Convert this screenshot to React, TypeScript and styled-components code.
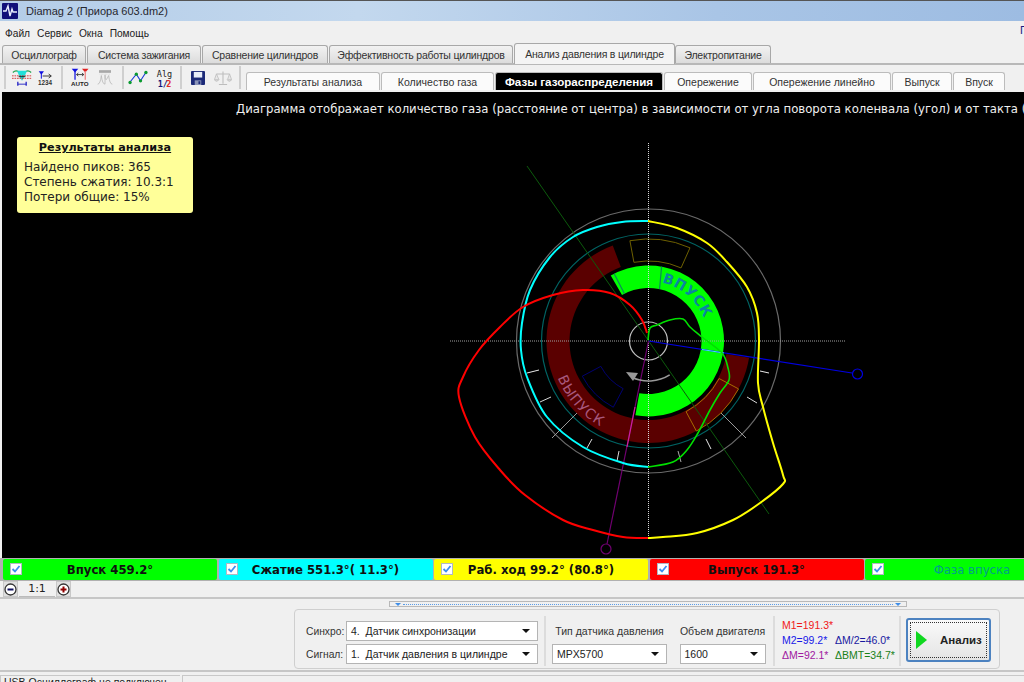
import React from 'react';
import styled, { createGlobalStyle } from 'styled-components';

const GlobalStyle = createGlobalStyle`
    html, body {
        margin: 0;
        padding: 0;
        background: #f0f0f0;
    }
`

const UI_FONT = `"Liberation Sans", Arial, sans-serif`
const WIDE_FONT = `"DejaVu Sans", Verdana, sans-serif`

// --- diagram maths ---
const CX = 648.5
const CY = 341

type Pt = [number, number]

const polar = (r: number, deg: number): Pt => {
    const a = (deg * Math.PI) / 180
    return [CX + r * Math.sin(a), CY - r * Math.cos(a)]
}

const sector = (r1: number, r2: number, from: number, to: number) => {
    const large = Math.abs(to - from) > 180 ? 1 : 0
    const [ax, ay] = polar(r2, from)
    const [bx, by] = polar(r2, to)
    const [cx, cy] = polar(r1, to)
    const [dx, dy] = polar(r1, from)
    return `M${ax} ${ay} A${r2} ${r2} 0 ${large} 1 ${bx} ${by} L${cx} ${cy} A${r1} ${r1} 0 ${large} 0 ${dx} ${dy} Z`
}

const arc = (r: number, from: number, to: number) => {
    const large = Math.abs(to - from) > 180 ? 1 : 0
    const sweep = to > from ? 1 : 0
    const [ax, ay] = polar(r, from)
    const [bx, by] = polar(r, to)
    return `M${ax} ${ay} A${r} ${r} 0 ${large} ${sweep} ${bx} ${by}`
}

const smooth = (p: Pt[]) => {
    let d = `M${p[0][0]} ${p[0][1]}`
    for (let i = 0; i < p.length - 1; i++) {
        const a = p[Math.max(i - 1, 0)]
        const b = p[i]
        const c = p[i + 1]
        const e = p[Math.min(i + 2, p.length - 1)]
        d += ` C${b[0] + (c[0] - a[0]) / 6} ${b[1] + (c[1] - a[1]) / 6} ${c[0] - (e[0] - b[0]) / 6} ${c[1] - (e[1] - b[1]) / 6} ${c[0]} ${c[1]}`
    }
    return d
}

const yellowCurve: Pt[] = [[648, 221], [677, 228], [707, 243], [727, 262], [747, 287], [757, 313], [759, 340], [758, 383], [763, 407], [773, 443], [783, 475], [783, 484], [760, 503], [733, 520], [697, 533], [663, 537], [648, 538]]
const redCurve: Pt[] = [[648, 538], [623, 537], [593, 530], [563, 520], [525, 495], [500, 470], [475, 437], [459, 397], [463, 377], [479, 350], [500, 327], [523, 307], [553, 295], [583, 290], [610, 293], [630, 305], [642, 320], [647, 333]]
const cyanCurve: Pt[] = [[648, 221], [622, 222], [597, 227], [573, 237], [550, 257], [530, 290], [522, 323], [521, 350], [527, 377], [547, 417], [583, 447], [623, 463], [648, 467]]
const greenCurve: Pt[] = [[648, 467], [673, 462], [687, 450], [698, 433], [710, 410], [720, 393], [729, 380], [728, 368], [722, 353], [702, 337], [690, 327], [683, 319], [670, 320], [657, 325], [650, 328], [648, 340]]

const ticks: [number, number, number, number, string][] = [
    [527, 373, 539, 370, '#e8e8e8'],
    [540, 402, 551, 397, '#d8d8d8'],
    [552, 438, 577, 413, '#999'],
    [587, 448, 592, 439, '#d8d8d8'],
    [617, 461, 619, 451, '#d8d8d8'],
    [678, 451, 681, 462, '#aaa'],
    [706, 439, 711, 449, '#e8e8e8'],
    [721, 413, 746, 438, '#999'],
    [747, 397, 757, 403, '#d8d8d8'],
    [760, 371, 769, 373, '#e8e8e8'],
]

const Diagram = () => (
    <DiagramSvg viewBox="2 92 1022 466">
        <defs>
            <path id="inletPath" d={arc(60, 13, 80)}/>
            <path id="exhaustPath" d={arc(98, 248, 192)}/>
        </defs>
        <circle cx={CX} cy={CY} r={132} fill="none" stroke="#6a6a6a" strokeWidth={1.2}/>
        <path d={sector(79, 102, 99.5, 339.5)} fill="#5a0000"/>
        <path d={sector(53, 75.5, -30, 190)} fill="#00ff00"/>
        <path d={`M${polar(53, 12).join(' ')} L${polar(75.5, 10).join(' ')}`} stroke="#0a8a5a" strokeWidth={1.2}/>
        <path d={`M${polar(53, -27).join(' ')} L${polar(75.5, -27).join(' ')}`} stroke="#0a8a5a" strokeWidth={1.2}/>
        <RingLabel fill="#0a86a0" $bold>
            <textPath href="#inletPath">ВПУСК</textPath>
        </RingLabel>
        <RingLabel fill="#a8587e">
            <textPath href="#exhaustPath">ВЫПУСК</textPath>
        </RingLabel>
        <circle cx={CX} cy={CY} r={107} fill="none" stroke="#006464" strokeWidth={1.2}/>
        <path d={sector(80, 102, -10.5, 24)} fill="none" stroke="#6e6000"/>
        <path d={sector(80, 102, 118, 152)} fill="none" stroke="#a86a00"/>
        <path d={sector(54, 75, 208, 242)} fill="none" stroke="#000070"/>
        <circle cx={CX} cy={CY} r={19} fill="none" stroke="#c0c0c0" strokeWidth={1.2}/>
        {ticks.map(([x1, y1, x2, y2, c]) => (
            <line key={`${x1}-${y1}`} x1={x1} y1={y1} x2={x2} y2={y2} stroke={c}/>
        ))}
        <line x1={450} y1={341} x2={846} y2={341} stroke="#a0a0a0" strokeDasharray="1 1"/>
        <line x1={648.5} y1={143} x2={648.5} y2={538} stroke="#d8d8d8" strokeDasharray="1 1"/>
        <line x1={527} y1={166} x2={769} y2={514} stroke="#0c5a0c"/>
        <line x1={CX} y1={CY} x2={852} y2={373} stroke="#0000e0" strokeWidth={1.2}/>
        <line x1={702} y1={349.5} x2={724} y2={353} stroke="#40e0ff" strokeWidth={1.2}/>
        <circle cx={857.5} cy={374} r={5} fill="none" stroke="#0000e0" strokeWidth={1.2}/>
        <line x1={CX} y1={CY} x2={607} y2={544} stroke="#700070" strokeWidth={1.2}/>
        <line x1={635} y1={407} x2={627} y2={447} stroke="#d0209a" strokeWidth={1.2}/>
        <circle cx={606} cy={549} r={5} fill="none" stroke="#700070" strokeWidth={1.2}/>
        <path d={arc(40, 148, 205)} fill="none" stroke="#999" strokeWidth={1.6}/>
        <path d="M626 372 L638 373 L633 381 Z" fill="#999"/>
        <path d={smooth(cyanCurve)} fill="none" stroke="#00ffff" strokeWidth={2}/>
        <path d={smooth(redCurve)} fill="none" stroke="#ff0000" strokeWidth={2}/>
        <path d={smooth(yellowCurve)} fill="none" stroke="#ffff00" strokeWidth={2}/>
        <path d={smooth(greenCurve)} fill="none" stroke="#00e000" strokeWidth={1.6}/>
    </DiagramSvg>
)

// --- small icons ---
const AppIcon = () => (
    <svg width="16" height="16" viewBox="0 0 16 16">
        <rect width="16" height="16" rx="1" fill="#10107a"/>
        <path d="M1 8 H4 L6 3 L8 13 L10 6 L11 9 H15" fill="none" stroke="#e8eeff" strokeWidth="1.4"/>
    </svg>
)

const ScopeIcon = () => (
    <svg width="20" height="19" viewBox="0 0 24 22">
        <path d="M1 5 Q5 1 9 5" fill="none" stroke="#18a048" strokeWidth="1.3"/>
        <path d="M15 5 Q19 1 23 5" fill="none" stroke="#18a048" strokeWidth="1.3"/>
        <path d="M6 3 H18 L15 10 L12 15 L9 10 Z" fill="#20e0d8"/>
        <path d="M0 9 H24 M0 12 H24" stroke="#d02020" strokeDasharray="2 1"/>
        <path d="M8 10 H16" stroke="#111"/>
        <path d="M7 16 V21 M17 16 V21" stroke="#1010c0" strokeWidth="1.4"/>
        <path d="M7 19 H17" stroke="#1010c0"/>
    </svg>
)

const CursorNumIcon = () => (
    <svg width="17" height="18" viewBox="0 0 24 24">
        <path d="M1 2 H9 L5 7 Z" fill="#1010e0"/>
        <path d="M5 5 V13" stroke="#1010e0" strokeWidth="1.5"/>
        <path d="M7 9 H19 M16 6 L20 9 L16 12" fill="none" stroke="#111" strokeWidth="1.2"/>
        <text x="0" y="23" fontFamily={UI_FONT} fontSize="9.5" fontWeight="700" fill="#333">1234</text>
    </svg>
)

const AutoIcon = () => (
    <svg width="19" height="19" viewBox="0 0 26 26">
        <path d="M1 1 H10 L5.5 6 Z" fill="#1010e0"/>
        <path d="M5.5 4 V16" stroke="#1010e0" strokeWidth="1.7"/>
        <path d="M15 1 H24 L19.5 6 Z" fill="#e02020"/>
        <path d="M19.5 4 V16" stroke="#f08080" strokeWidth="1.7"/>
        <path d="M8 9 H17 M10 7 L7.5 9 L10 11 M15 7 L17.5 9 L15 11" fill="none" stroke="#111"/>
        <text x="0" y="25" fontFamily={UI_FONT} fontSize="8.5" fontWeight="700" fill="#222">AUTO</text>
    </svg>
)

const PeaksIcon = () => (
    <svg width="17" height="19" viewBox="0 0 24 24">
        <rect x="3" y="1" width="18" height="4" fill="#a8a8a8"/>
        <path d="M1 22 Q5 22 6.5 9 Q8 22 12 22 Q12 8 12 8 Q12 22 17.5 9 Q19 22 23 22" fill="none" stroke="#b8b8b8" strokeWidth="1.2"/>
        <path d="M4 7 H20" stroke="#ccc" strokeDasharray="1 1"/>
    </svg>
)

const PolylineIcon = () => (
    <svg width="20" height="17" viewBox="0 0 24 20">
        <path d="M2 16 L10 6 L15 14 L22 3" fill="none" stroke="#1a3ad8" strokeWidth="1.3"/>
        <circle cx="2.5" cy="16" r="2" fill="#0a9a30"/>
        <circle cx="10" cy="6" r="2" fill="#0a9a30"/>
        <circle cx="15" cy="14" r="2" fill="#0a9a30"/>
        <circle cx="21.5" cy="4" r="2" fill="#0a9a30"/>
    </svg>
)

const AlgIcon = () => (
    <svg width="17" height="20" viewBox="0 0 20 23">
        <text x="1" y="10" fontFamily="'DejaVu Sans Mono', monospace" fontSize="10" fill="#222">Alg</text>
        <text x="2" y="22" fontFamily="'DejaVu Sans Mono', monospace" fontSize="10" fontWeight="700" fill="#15157a">1/</text>
        <text x="12" y="22" fontFamily="'DejaVu Sans Mono', monospace" fontSize="10" fontWeight="700" fill="#e02828">2</text>
    </svg>
)

const SaveIcon = () => (
    <svg width="14" height="14" viewBox="0 0 15 15">
        <rect width="15" height="15" rx="1" fill="#1c2a78"/>
        <rect x="3" y="1" width="9" height="6" fill="#e8eef8"/>
        <rect x="4" y="10" width="7" height="5" fill="#8a94b8"/>
        <rect x="8" y="11" width="2" height="3" fill="#1c2a78"/>
    </svg>
)

const ScaleIcon = () => (
    <svg width="20" height="16" viewBox="0 0 22 18">
        <path d="M11 1 V16 M6 17 H16 M3 4 H19" stroke="#bdbdbd" strokeWidth="1.3"/>
        <path d="M3 4 L0.5 11 H6 Z M19 4 L16.5 11 H21.5 Z" fill="#e8e8e8" stroke="#bdbdbd"/>
        <path d="M0.5 11 Q3 15 6 11 M16 11 Q19 15 21.5 11" fill="#d8d8d8" stroke="#bdbdbd"/>
    </svg>
)

const CheckBox = () => (
    <Check>
        <svg width="10" height="10" viewBox="0 0 10 10">
            <path d="M1.5 5 L4 7.5 L8.5 2" fill="none" stroke="#3a8ef0" strokeWidth="1.8"/>
        </svg>
    </Check>
)

// --- data ---
const mainTabs = [
    { label: 'Осциллограф', w: 84 },
    { label: 'Система зажигания', w: 114 },
    { label: 'Сравнение цилиндров', w: 126 },
    { label: 'Эффективность работы цилиндров', w: 184 },
    { label: 'Анализ давления в цилиндре', w: 161, active: true },
    { label: 'Электропитание', w: 96 },
]

const subTabs = [
    { label: 'Результаты анализа', w: 134 },
    { label: 'Количество газа', w: 113 },
    { label: 'Фазы газораспределения', w: 168, active: true },
    { label: 'Опережение', w: 88 },
    { label: 'Опережение линейно', w: 138 },
    { label: 'Выпуск', w: 60 },
    { label: 'Впуск', w: 52 },
]

const phases = [
    { label: 'Впуск 459.2°', bg: '#00ff00' },
    { label: 'Сжатие 551.3°( 11.3°)', bg: '#00ffff' },
    { label: 'Раб. ход 99.2° (80.8°)', bg: '#ffff00' },
    { label: 'Выпуск 191.3°', bg: '#ff0000' },
    { label: 'Фаза впуска', bg: '#00ff00', muted: true },
]

export default function App() {
    return (
        <Page>
            <GlobalStyle/>
            <TitleBar>
                <AppIcon/>
                <TitleText>Diamag 2 (Приора 603.dm2)</TitleText>
            </TitleBar>
            <MenuBar>
                <MenuItem>Файл</MenuItem>
                <MenuItem>Сервис</MenuItem>
                <MenuItem>Окна</MenuItem>
                <MenuItem>Помощь</MenuItem>
                <RightMark>П</RightMark>
            </MenuBar>
            <MainTabs>
                {mainTabs.map(t => (
                    <MainTab key={t.label} $w={t.w} $active={t.active}>{t.label}</MainTab>
                ))}
            </MainTabs>
            <ToolRow>
                <Toolbar>
                    <ToolSep/>
                    <ToolSlot $w={32}><ScopeIcon/></ToolSlot>
                    <ToolSlot $w={16} $mr={7}><CursorNumIcon/></ToolSlot>
                    <ToolSep/>
                    <ToolSlot $w={34}><AutoIcon/></ToolSlot>
                    <ToolSlot $w={16} $mr={9}><PeaksIcon/></ToolSlot>
                    <ToolSep/>
                    <ToolSlot $w={28}><PolylineIcon/></ToolSlot>
                    <ToolSlot $w={24} $mr={4}><AlgIcon/></ToolSlot>
                    <ToolSep/>
                    <ToolSlot $w={32}><SaveIcon/></ToolSlot>
                    <ToolSlot $w={18} $mr={7}><ScaleIcon/></ToolSlot>
                    <ToolSep/>
                </Toolbar>
                <SubTabs>
                    {subTabs.map(t => (
                        <SubTab key={t.label} $w={t.w} $active={t.active}>{t.label}</SubTab>
                    ))}
                </SubTabs>
            </ToolRow>
            <Canvas>
                <Diagram/>
                <Heading>Диаграмма отображает количество газа (расстояние от центра) в зависимости от угла поворота коленвала (угол) и от такта (цвет)</Heading>
                <Results>
                    <ResultsTitle>Результаты анализа</ResultsTitle>
                    <ResultsLine>Найдено пиков: 365</ResultsLine>
                    <ResultsLine>Степень сжатия: 10.3:1</ResultsLine>
                    <ResultsLine>Потери общие: 15%</ResultsLine>
                </Results>
            </Canvas>
            <PhaseRow>
                {phases.map(p => (
                    <PhaseButton key={p.label} $bg={p.bg}>
                        <CheckBox/>
                        <PhaseLabel $muted={p.muted}>{p.label}</PhaseLabel>
                    </PhaseButton>
                ))}
            </PhaseRow>
            <ZoomRow>
                <ZoomBtn>
                    <svg width="13" height="13" viewBox="0 0 13 13">
                        <circle cx="6.5" cy="6.5" r="5.5" fill="#fff" stroke="#333" strokeWidth="1.3"/>
                        <path d="M3.5 6.5 H9.5" stroke="#101060" strokeWidth="2"/>
                    </svg>
                </ZoomBtn>
                <ZoomValue>1:1</ZoomValue>
                <ZoomBtn>
                    <svg width="13" height="13" viewBox="0 0 13 13">
                        <circle cx="6.5" cy="6.5" r="5.5" fill="#fff" stroke="#333" strokeWidth="1.3"/>
                        <path d="M3.5 6.5 H9.5 M6.5 3.5 V9.5" stroke="#900000" strokeWidth="2"/>
                    </svg>
                </ZoomBtn>
            </ZoomRow>
            <Bottom>
                <Splitter>
                    <SplitMark/>
                    <SplitDots/>
                    <SplitMark/>
                </Splitter>
                <Panel>
                    <SignalGrid>
                        <FieldLabel>Синхро:</FieldLabel>
                        <Select $w={192}>4.&nbsp; Датчик синхронизации</Select>
                        <FieldLabel>Сигнал:</FieldLabel>
                        <Select $w={192}>1.&nbsp; Датчик давления в цилиндре</Select>
                    </SignalGrid>
                    <PanelSep/>
                    <FieldColumn $w={115} $mr={12}>
                        <ColumnLabel>Тип датчика давления</ColumnLabel>
                        <Select $w={115}>MPX5700</Select>
                    </FieldColumn>
                    <FieldColumn $w={87} $mr={1}>
                        <ColumnLabel>Объем двигателя</ColumnLabel>
                        <Select $w={86}>1600</Select>
                    </FieldColumn>
                    <PanelSep/>
                    <Marks>
                        <Mark $c="#f01818">M1=191.3*</Mark>
                        <span/>
                        <Mark $c="#1818e8">M2=99.2*</Mark>
                        <Mark $c="#1818a0">ΔM/2=46.0*</Mark>
                        <Mark $c="#a018a0">ΔM=92.1*</Mark>
                        <Mark $c="#188018">ΔBMT=34.7*</Mark>
                    </Marks>
                    <PanelSep/>
                    <AnalyzeButton>
                        <FocusBox>
                            <svg width="11" height="18" viewBox="0 0 11 18">
                                <path d="M0 0 L11 9 L0 18 Z" fill="#10d820"/>
                            </svg>
                            <AnalyzeText>Анализ</AnalyzeText>
                        </FocusBox>
                    </AnalyzeButton>
                </Panel>
            </Bottom>
            <StatusBar>
                <StatusCell $w={180}>USB Осциллограф не подключен</StatusCell>
                <StatusCell $w={842}/>
            </StatusBar>
        </Page>
    );
}

const Page = styled.div`
    width: 1024px;
    height: 682px;
    overflow: hidden;
    display: flex;
    flex-direction: column;
    background: #f0f0f0;
    font-family: ${UI_FONT};
    font-size: 10.5px;
    color: #222;
`

const TitleBar = styled.div`
    height: 20px;
    flex: none;
    display: flex;
    align-items: center;
    gap: 8px;
    padding-left: 2px;
    border-top: 1px solid #555;
    background: linear-gradient(90deg, #b4cde8 0%, #c3d8ee 35%, #a9c5e6 70%, #9dbce2 100%);
`

const TitleText = styled.span`
    font-size: 11px;
    color: #26262e;
`

const MenuBar = styled.div`
    height: 22px;
    flex: none;
    display: flex;
    align-items: center;
    gap: 7px;
    padding: 2px 0 0 5px;
    box-sizing: border-box;
    position: relative;
`

const MenuItem = styled.span`
    font-size: 10.2px;
    color: #222;
`

const RightMark = styled.span`
    position: absolute;
    left: 1020px;
    top: 3px;
    font-size: 11px;
    color: #1a1a80;
`

const MainTabs = styled.div`
    height: 22px;
    flex: none;
    box-sizing: border-box;
    display: flex;
    align-items: flex-end;
    gap: 1px;
    padding-left: 2px;
    border-bottom: 2px solid #b8b8b8;
`

const MainTab = styled.div<{ $w: number; $active?: boolean }>`
    width: ${p => p.$w}px;
    margin-right: ${p => (p.$active ? '-1px' : '0')};
    height: ${p => (p.$active ? '21px' : '18px')};
    margin-bottom: ${p => (p.$active ? '-1px' : '0')};
    box-sizing: border-box;
    display: flex;
    align-items: center;
    justify-content: center;
    border: 1px solid #a8a8a8;
    border-bottom: none;
    border-radius: 3px 3px 0 0;
    background: ${p => (p.$active ? '#f4f4f4' : 'linear-gradient(#f2f2f2, #dcdcdc)')};
    white-space: nowrap;
    letter-spacing: -0.2px;
    color: #333;
`

const ToolRow = styled.div`
    height: 27px;
    flex: none;
    display: flex;
    align-items: flex-end;
    box-sizing: border-box;
    padding-bottom: 2px;
`

const Toolbar = styled.div`
    width: 246px;
    height: 23px;
    margin-bottom: 1px;
    padding-left: 4px;
    box-sizing: border-box;
    display: flex;
    align-items: center;
    flex: none;
`

const ToolSep = styled.div`
    width: 2px;
    height: 23px;
    flex: none;
    background: #cfcfcf;
`

const ToolSlot = styled.div<{ $w: number; $mr?: number }>`
    width: ${p => p.$w}px;
    margin-right: ${p => p.$mr ?? 0}px;
    flex: none;
    display: flex;
    align-items: center;
    justify-content: center;
`

const SubTabs = styled.div`
    display: flex;
    gap: 1px;
    align-items: flex-end;
`

const SubTab = styled.div<{ $w: number; $active?: boolean }>`
    width: ${p => p.$w}px;
    height: 18px;
    box-sizing: border-box;
    display: flex;
    align-items: center;
    justify-content: center;
    border: 1px solid #bcbcbc;
    border-bottom: none;
    border-radius: 3px 3px 0 0;
    white-space: nowrap;
    background: ${p => (p.$active ? '#000' : '#fbfbfb')};
    color: ${p => (p.$active ? '#fff' : '#333')};
    font-weight: ${p => (p.$active ? 700 : 400)};
    font-size: ${p => (p.$active ? '11.6px' : '10.5px')};
`

const Canvas = styled.div`
    height: 466px;
    flex: none;
    position: relative;
    box-sizing: border-box;
    margin-left: 2px;
    background: #000;
    overflow: hidden;
`

const DiagramSvg = styled.svg`
    position: absolute;
    left: 0;
    top: 0;
    width: 1022px;
    height: 466px;
`

const RingLabel = styled.text<{ $bold?: boolean }>`
    font-family: ${WIDE_FONT};
    font-size: 14px;
    font-weight: ${p => (p.$bold ? 700 : 400)};
    letter-spacing: ${p => (p.$bold ? '0.5px' : '1px')};
`

const Heading = styled.div`
    position: relative;
    margin: 10px 0 0 234px;
    width: 900px;
    font-family: ${WIDE_FONT};
    font-size: 11.7px;
    line-height: 15px;
    white-space: nowrap;
    color: #f0f0f0;
`

const Results = styled.div`
    position: absolute;
    left: 15px;
    top: 45px;
    width: 176px;
    height: 76px;
    box-sizing: border-box;
    padding: 3px 7px;
    border-radius: 3px;
    background: #ffff99;
    font-family: ${WIDE_FONT};
    font-size: 12px;
    line-height: 15px;
    color: #222;
`

const ResultsTitle = styled.div`
    margin-bottom: 5px;
    font-size: 11.2px;
    font-weight: 700;
    text-align: center;
    text-decoration: underline;
    color: #111;
`

const ResultsLine = styled.div`
    white-space: nowrap;
`

const PhaseRow = styled.div`
    height: 23px;
    flex: none;
    box-sizing: border-box;
    padding: 1px 0 1px 3px;
    display: flex;
    gap: 1.5px;
    background: #b0b0b0;
    width: 1100px;
`

const PhaseButton = styled.div<{ $bg: string }>`
    width: 214px;
    flex: none;
    position: relative;
    display: flex;
    align-items: center;
    justify-content: center;
    border-radius: 2px;
    background: ${p => p.$bg};
`

const Check = styled.span`
    position: absolute;
    left: 7px;
    top: 4px;
    width: 12px;
    height: 12px;
    display: flex;
    align-items: center;
    justify-content: center;
    box-sizing: border-box;
    border: 1px solid #b0b8c4;
    background: #fff;
`

const PhaseLabel = styled.span<{ $muted?: boolean }>`
    font-family: ${WIDE_FONT};
    font-size: 11.7px;
    font-weight: ${p => (p.$muted ? 400 : 700)};
    color: ${p => (p.$muted ? '#00a08a' : '#101010')};
    white-space: nowrap;
`

const ZoomRow = styled.div`
    height: 16px;
    flex: none;
    display: flex;
    align-items: stretch;
    gap: 1px;
    padding-left: 3px;
`

const ZoomBtn = styled.div`
    width: 15px;
    display: flex;
    align-items: center;
    justify-content: center;
    background: #e0e0e0;
    border: 1px solid #c8c8c8;
    box-sizing: border-box;
`

const ZoomValue = styled.div`
    width: 36px;
    display: flex;
    align-items: center;
    justify-content: center;
    border-bottom: 1px solid #bbb;
    font-family: ${WIDE_FONT};
    font-size: 11px;
    color: #222;
`

const Bottom = styled.div`
    height: 75px;
    flex: none;
    box-sizing: border-box;
    border-top: 2px solid #c6c6c6;
    border-bottom: 2px solid #c6c6c6;
    display: flex;
    flex-direction: column;
    align-items: flex-start;
`

const Splitter = styled.div`
    width: 518px;
    height: 6px;
    margin: 2px 0 0 389px;
    box-sizing: border-box;
    padding: 0 5px;
    border: 1px solid #b8b8b8;
    display: flex;
    align-items: center;
    gap: 2px;
`

const SplitMark = styled.div`
    width: 0;
    height: 0;
    border-left: 3px solid transparent;
    border-right: 3px solid transparent;
    border-top: 3px solid #3f8ee8;
`

const SplitDots = styled.div`
    flex: 1;
    border-top: 1px dotted #5a9ce8;
`

const Panel = styled.div`
    width: 706px;
    height: 60px;
    margin: 2px 0 0 294px;
    box-sizing: border-box;
    padding: 4px 0 0 10px;
    border: 1px solid #cfcfcf;
    border-radius: 4px;
    display: flex;
    align-items: center;
`

const SignalGrid = styled.div`
    display: grid;
    grid-template-columns: 41px 192px;
    grid-auto-rows: 20px;
    row-gap: 3px;
    align-items: center;
    margin-top: 3px;
`

const FieldLabel = styled.span`
    padding-left: 1px;
    font-size: 10.3px;
    color: #333;
`

const Select = styled.div<{ $w: number }>`
    width: ${p => p.$w}px;
    height: 20px;
    box-sizing: border-box;
    padding-left: 4px;
    position: relative;
    display: flex;
    align-items: center;
    border: 1px solid #b4b4b4;
    background: #fff;
    font-size: 10.5px;
    color: #222;
    white-space: nowrap;

    &::after {
        content: '';
        position: absolute;
        right: 7px;
        top: 7px;
        border-left: 4px solid transparent;
        border-right: 4px solid transparent;
        border-top: 4px solid #111;
    }
`

const PanelSep = styled.div`
    width: 2px;
    height: 50px;
    flex: none;
    margin: 0 6px;
    background: #dcdcdc;
`

const FieldColumn = styled.div<{ $w: number; $mr: number }>`
    width: ${p => p.$w}px;
    margin-right: ${p => p.$mr}px;
    margin-top: 3px;
    flex: none;
    display: flex;
    flex-direction: column;
    align-items: center;
    gap: 3px;
`

const ColumnLabel = styled.div`
    height: 20px;
    display: flex;
    align-items: center;
    white-space: nowrap;
    color: #333;
`

const Marks = styled.div`
    width: 111px;
    flex: none;
    margin: -2px 0 0 1px;
    display: grid;
    grid-template-columns: 53px 58px;
    grid-auto-rows: 15px;
    align-items: center;
`

const Mark = styled.span<{ $c: string }>`
    color: ${p => p.$c};
    white-space: nowrap;
`

const AnalyzeButton = styled.div`
    width: 85px;
    height: 44px;
    flex: none;
    margin: -2px 0 0 -1px;
    box-sizing: border-box;
    padding: 2px;
    border: 2px solid #4c82c0;
    border-radius: 3px;
    background: linear-gradient(#fafafa, #e4e4e4);
`

const FocusBox = styled.div`
    height: 100%;
    box-sizing: border-box;
    border: 1px dotted #333;
    padding-left: 5px;
    display: flex;
    align-items: center;
    gap: 13px;
`

const AnalyzeText = styled.span`
    font-size: 11.5px;
    font-weight: 700;
    color: #222;
`

const StatusBar = styled.div`
    height: 10px;
    flex: none;
    display: flex;
    gap: 2px;
    padding-top: 3px;
    overflow: hidden;
`

const StatusCell = styled.div<{ $w: number }>`
    width: ${p => p.$w}px;
    flex: none;
    box-sizing: border-box;
    padding-left: 3px;
    border-top: 1px solid #c8c8c8;
    border-left: 1px solid #c8c8c8;
    font-size: 10.5px;
    line-height: 12px;
    white-space: nowrap;
    color: #222;
`
